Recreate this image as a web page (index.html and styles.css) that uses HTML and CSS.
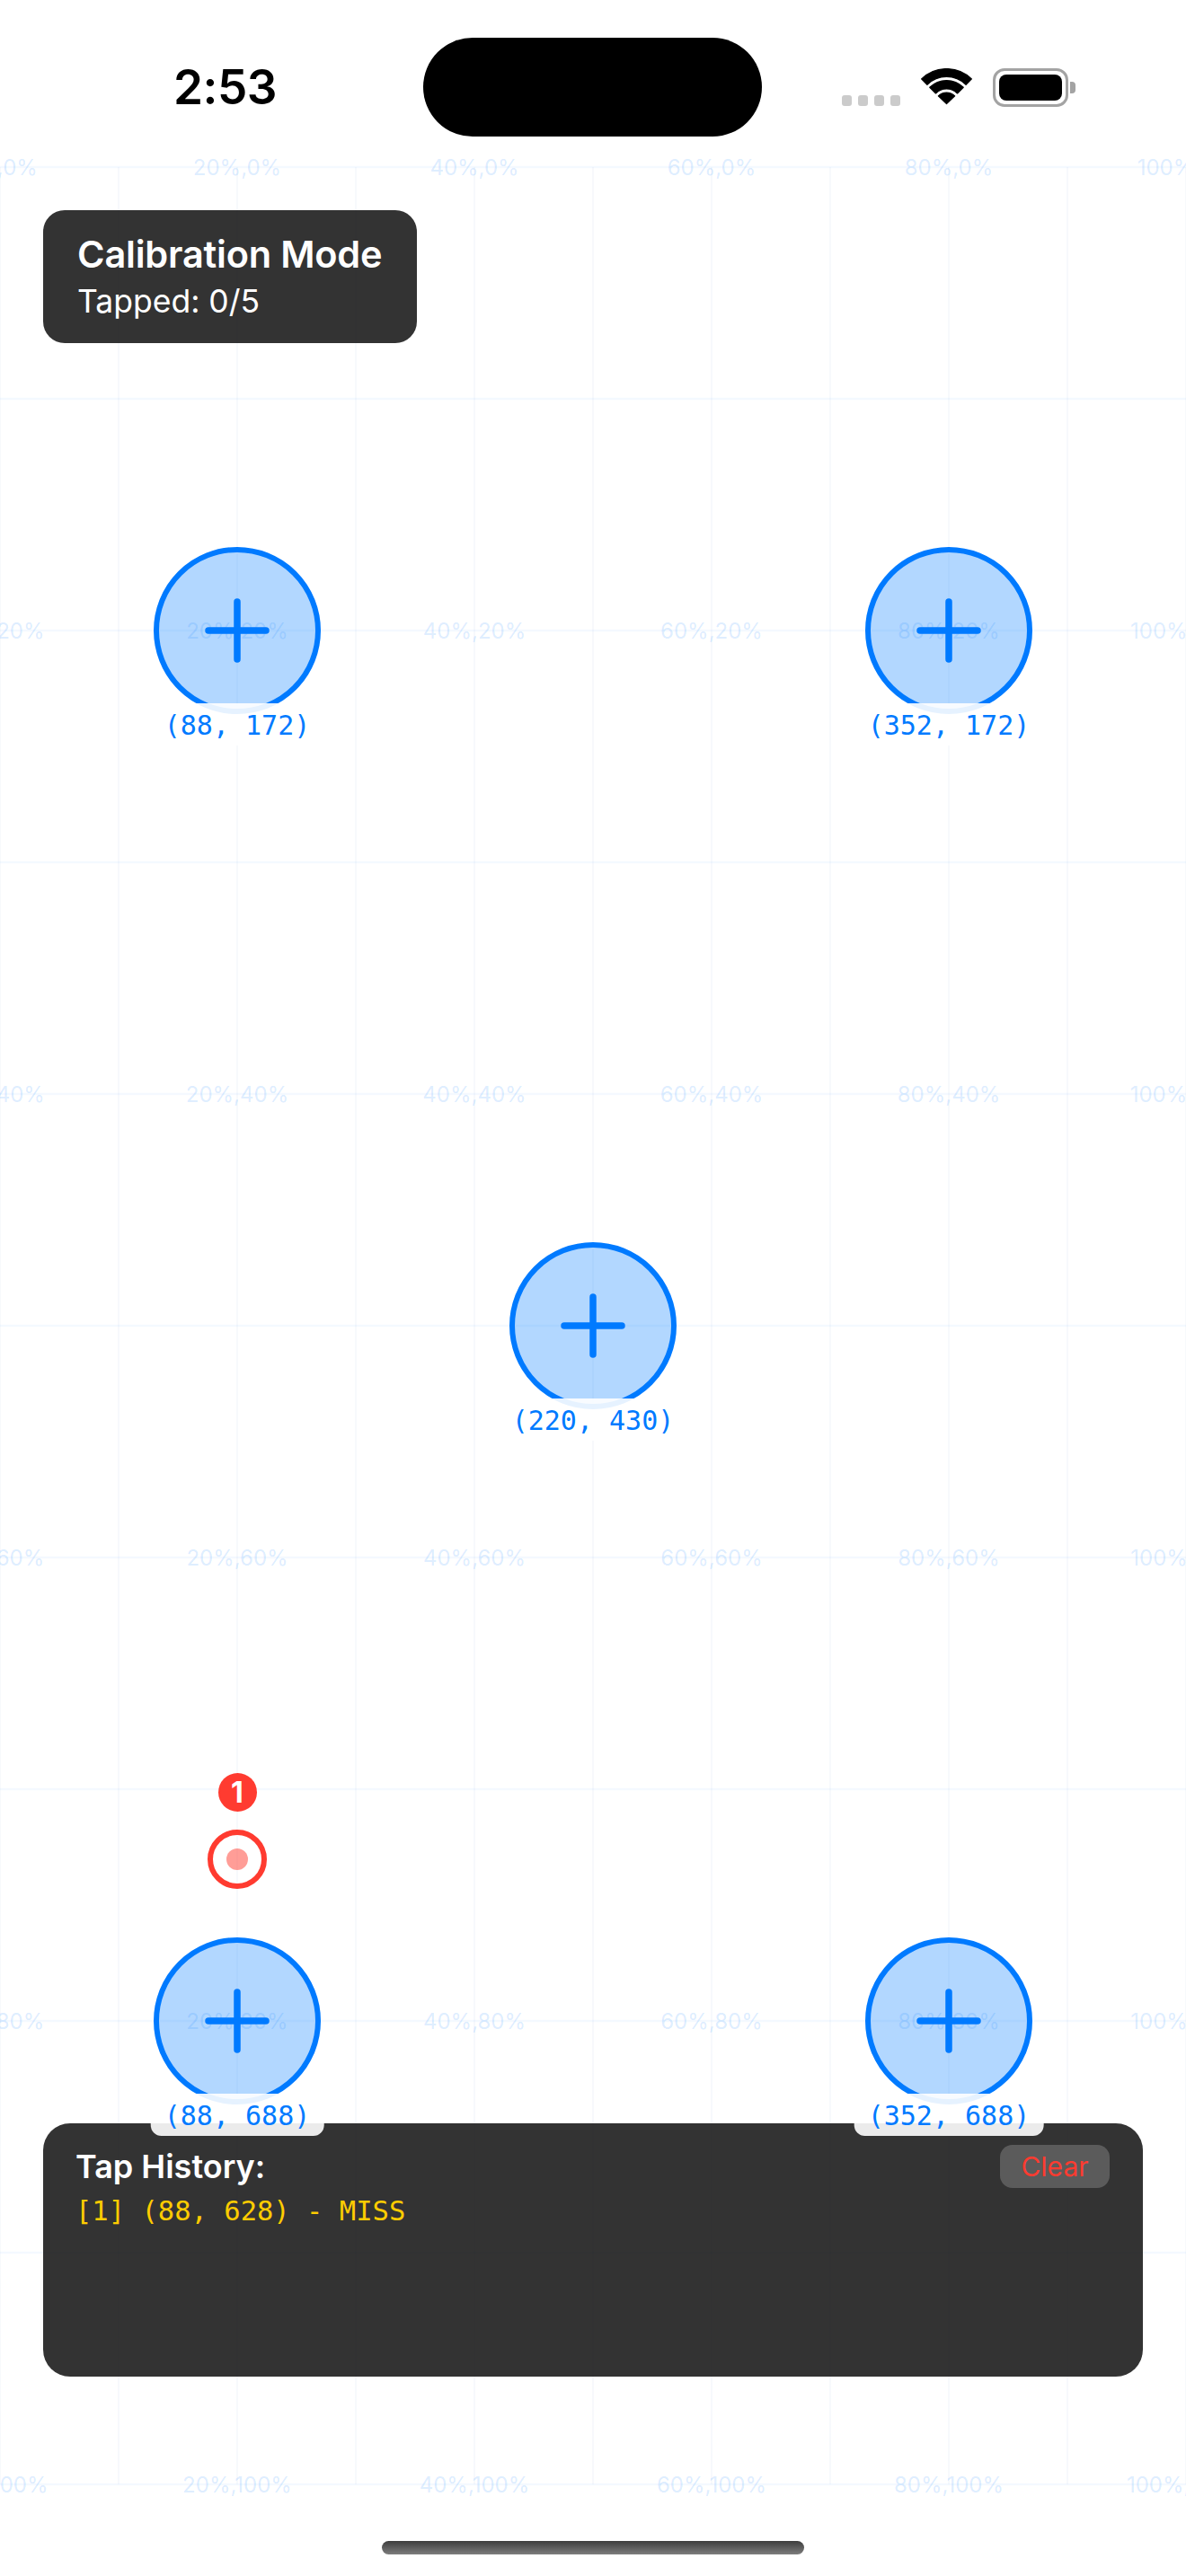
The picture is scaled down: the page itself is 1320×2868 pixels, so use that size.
FILE: index.html
```html
<!DOCTYPE html>
<html lang="en">
<head>
<meta charset="utf-8">
<title>Calibration Mode</title>
<link rel="stylesheet" href="styles.css">
</head>
<body>
<div class="phone">
  <div class="canvas">
    <svg class="grid" width="1320" height="2868" viewBox="0 0 1320 2868">
      <g class="vlines">
        <line x1="0" y1="186" x2="0" y2="2766"/>
        <line x1="132" y1="186" x2="132" y2="2766"/>
        <line x1="264" y1="186" x2="264" y2="2766"/>
        <line x1="396" y1="186" x2="396" y2="2766"/>
        <line x1="528" y1="186" x2="528" y2="2766"/>
        <line x1="660" y1="186" x2="660" y2="2766"/>
        <line x1="792" y1="186" x2="792" y2="2766"/>
        <line x1="924" y1="186" x2="924" y2="2766"/>
        <line x1="1056" y1="186" x2="1056" y2="2766"/>
        <line x1="1188" y1="186" x2="1188" y2="2766"/>
        <line x1="1320" y1="186" x2="1320" y2="2766"/>
      </g>
      <g class="hlines">
        <line x1="0" y1="186" x2="1320" y2="186"/>
        <line x1="0" y1="444" x2="1320" y2="444"/>
        <line x1="0" y1="702" x2="1320" y2="702"/>
        <line x1="0" y1="960" x2="1320" y2="960"/>
        <line x1="0" y1="1218" x2="1320" y2="1218"/>
        <line x1="0" y1="1476" x2="1320" y2="1476"/>
        <line x1="0" y1="1734" x2="1320" y2="1734"/>
        <line x1="0" y1="1992" x2="1320" y2="1992"/>
        <line x1="0" y1="2250" x2="1320" y2="2250"/>
        <line x1="0" y1="2508" x2="1320" y2="2508"/>
        <line x1="0" y1="2766" x2="1320" y2="2766"/>
      </g>
    </svg>

    <span class="gl x0 y0">0%,0%</span><span class="gl x1 y0">20%,0%</span><span class="gl x2 y0">40%,0%</span><span class="gl x3 y0">60%,0%</span><span class="gl x4 y0">80%,0%</span><span class="gl x5 y0">100%,0%</span>
    <span class="gl x0 y1">0%,20%</span><span class="gl x1 y1">20%,20%</span><span class="gl x2 y1">40%,20%</span><span class="gl x3 y1">60%,20%</span><span class="gl x4 y1">80%,20%</span><span class="gl x5 y1">100%,20%</span>
    <span class="gl x0 y2">0%,40%</span><span class="gl x1 y2">20%,40%</span><span class="gl x2 y2">40%,40%</span><span class="gl x3 y2">60%,40%</span><span class="gl x4 y2">80%,40%</span><span class="gl x5 y2">100%,40%</span>
    <span class="gl x0 y3">0%,60%</span><span class="gl x1 y3">20%,60%</span><span class="gl x2 y3">40%,60%</span><span class="gl x3 y3">60%,60%</span><span class="gl x4 y3">80%,60%</span><span class="gl x5 y3">100%,60%</span>
    <span class="gl x0 y4">0%,80%</span><span class="gl x1 y4">20%,80%</span><span class="gl x2 y4">40%,80%</span><span class="gl x3 y4">60%,80%</span><span class="gl x4 y4">80%,80%</span><span class="gl x5 y4">100%,80%</span>
    <span class="gl x0 y5">0%,100%</span><span class="gl x1 y5">20%,100%</span><span class="gl x2 y5">40%,100%</span><span class="gl x3 y5">60%,100%</span><span class="gl x4 y5">80%,100%</span><span class="gl x5 y5">100%,100%</span>

    <div class="target ta">
      <div class="disc"><svg class="plus" width="72" height="72" viewBox="0 0 72 72"><path d="M36 4V68M4 36H68"/></svg></div>
      <div class="coord">(88, 172)</div>
    </div>
    <div class="target tb">
      <div class="disc"><svg class="plus" width="72" height="72" viewBox="0 0 72 72"><path d="M36 4V68M4 36H68"/></svg></div>
      <div class="coord">(352, 172)</div>
    </div>
    <div class="target tc">
      <div class="disc"><svg class="plus" width="72" height="72" viewBox="0 0 72 72"><path d="M36 4V68M4 36H68"/></svg></div>
      <div class="coord">(220, 430)</div>
    </div>
    <div class="target td">
      <div class="disc"><svg class="plus" width="72" height="72" viewBox="0 0 72 72"><path d="M36 4V68M4 36H68"/></svg></div>
      <div class="coord">(88, 688)</div>
    </div>
    <div class="target te">
      <div class="disc"><svg class="plus" width="72" height="72" viewBox="0 0 72 72"><path d="M36 4V68M4 36H68"/></svg></div>
      <div class="coord">(352, 688)</div>
    </div>

    <div class="tap">
      <div class="tap-badge">1</div>
      <div class="tap-ring"><div class="tap-dot"></div></div>
    </div>
  </div>

  <header class="status">
    <div class="time-cell"><span class="time">2:53</span></div>
    <div class="island"></div>
    <div class="indicators">
      <div class="signal"><i></i><i></i><i></i><i></i></div>
      <svg class="wifi" width="57" height="41" viewBox="0 0 57 41">
        <path d="M0.6 11.9A40 40 0 0 1 56.4 11.9L50.07 18.43A30.5 30.5 0 0 0 6.93 18.43Z"/>
        <path d="M9.76 21.26A26.5 26.5 0 0 1 47.24 21.26L40.52 27.98A17 17 0 0 0 16.48 27.98Z"/>
        <path d="M19.31 30.81A13 13 0 0 1 37.69 30.81L28.5 39.5Z"/>
      </svg>
      <div class="battery">
        <div class="battery-body"><div class="battery-fill"></div></div>
        <div class="battery-cap"></div>
      </div>
    </div>
  </header>

  <main class="overlay">
    <section class="calib">
      <div class="calib-title">Calibration Mode</div>
      <div class="calib-sub">Tapped: 0/5</div>
    </section>
    <section class="history">
      <div class="history-head">
        <div class="history-title">Tap History:</div>
        <button class="clear" type="button">Clear</button>
      </div>
      <div class="history-line">[1] (88, 628) - MISS</div>
    </section>
  </main>

  <footer class="home"><div class="home-bar"></div></footer>
</div>
</body>
</html>
```

FILE: styles.css
```css
* { box-sizing: border-box; }

html, body {
  margin: 0;
  padding: 0;
  background: #ffffff;
}

body {
  font-family: Inter, "Noto Sans", "Liberation Sans", sans-serif;
}

.phone {
  position: relative;
  width: 1320px;
  height: 2868px;
  overflow: hidden;
  display: flex;
  flex-direction: column;
  background: #ffffff;
}

/* ---------- free canvas: grid, targets, taps ---------- */
.canvas {
  position: absolute;
  left: 0;
  top: 0;
  width: 1320px;
  height: 2868px;
}

.grid {
  position: absolute;
  left: 0;
  top: 0;
}

.vlines line {
  stroke: rgba(40, 90, 170, 0.035);
  stroke-width: 2;
}

.hlines line {
  stroke: rgba(0, 122, 255, 0.045);
  stroke-width: 2.5;
}

.gl {
  position: absolute;
  transform: translate(-50%, -50%);
  font-family: Inter, "Liberation Sans", sans-serif;
  font-size: 24px;
  line-height: 24px;
  color: rgba(0, 122, 255, 0.15);
  white-space: nowrap;
}

.x0 { left: 0; }
.x1 { left: 264px; }
.x2 { left: 528px; }
.x3 { left: 792px; }
.x4 { left: 1056px; }
.x5 { left: 1320px; }
.y0 { top: 187px; }
.y1 { top: 703px; }
.y2 { top: 1219px; }
.y3 { top: 1735px; }
.y4 { top: 2251px; }
.y5 { top: 2767px; }

.target {
  position: absolute;
  width: 0;
  height: 0;
}

.ta { left: 264px; top: 702px; }
.tb { left: 1056px; top: 702px; }
.tc { left: 660px; top: 1476px; }
.td { left: 264px; top: 2250px; }
.te { left: 1056px; top: 2250px; }

.disc {
  position: absolute;
  left: -93px;
  top: -93px;
  width: 186px;
  height: 186px;
  border: 6px solid #007AFF;
  border-radius: 50%;
  background: rgba(0, 122, 255, 0.3);
  display: flex;
  align-items: center;
  justify-content: center;
}

.plus path {
  fill: none;
  stroke: #007AFF;
  stroke-width: 7.5;
  stroke-linecap: round;
}

.coord {
  position: absolute;
  z-index: 2;
  top: 81px;
  left: 0;
  transform: translateX(-50%);
  padding: 4px 15px 2px;
  border-radius: 12px;
  background: rgba(255, 255, 255, 0.9);
  color: #007AFF;
  font-family: "DejaVu Sans Mono", "Liberation Mono", monospace;
  font-size: 30px;
  line-height: 41px;
  white-space: nowrap;
}

.tap {
  position: absolute;
  left: 264px;
  top: 2070px;
  width: 0;
  height: 0;
}

.tap-ring {
  position: absolute;
  left: -33px;
  top: -33px;
  width: 66px;
  height: 66px;
  border: 6px solid #FF3B30;
  border-radius: 50%;
  display: flex;
  align-items: center;
  justify-content: center;
}

.tap-dot {
  width: 24px;
  height: 24px;
  border-radius: 50%;
  background: rgba(255, 59, 48, 0.5);
}

.tap-badge {
  position: absolute;
  left: -21.5px;
  top: -96px;
  width: 43px;
  height: 43px;
  border-radius: 50%;
  background: #FF3B30;
  color: #ffffff;
  font-weight: 700;
  font-size: 32px;
  line-height: 43px;
  text-align: center;
}

/* ---------- status bar ---------- */
.status {
  position: relative;
  z-index: 1;
  height: 110px;
  margin-top: 42px;
  display: flex;
  align-items: center;
  flex-shrink: 0;
}

.time-cell {
  width: 471px;
  padding-left: 193px;
}

.time {
  font-size: 53px;
  font-weight: 600;
  letter-spacing: -0.5px;
  color: #000000;
  line-height: 60px;
  display: block;
}

.island {
  width: 377px;
  height: 110px;
  border-radius: 55px;
  background: #000000;
}

.indicators {
  display: flex;
  align-items: center;
  padding-left: 89px;
}

.signal {
  display: flex;
  gap: 7px;
  margin-top: 29px;
}

.signal i {
  display: block;
  width: 11px;
  height: 12px;
  border-radius: 3px;
  background: #cbcbcb;
}

.wifi {
  margin-left: 23px;
  margin-top: -1px;
}

.wifi path {
  fill: #000000;
  stroke: #000000;
  stroke-width: 1.2;
  stroke-linejoin: round;
}

.battery {
  display: flex;
  align-items: center;
  margin-left: 23px;
}

.battery-body {
  width: 84px;
  height: 43px;
  border: 3px solid #a3a3a3;
  border-radius: 13px;
  padding: 4px;
}

.battery-fill {
  width: 100%;
  height: 100%;
  border-radius: 8px;
  background: #000000;
}

.battery-cap {
  width: 6px;
  height: 13px;
  margin-left: 2px;
  border-radius: 0 4px 4px 0;
  background: #a3a3a3;
}

/* ---------- overlay panels ---------- */
.overlay {
  position: relative;
  z-index: 1;
  flex: 1;
  display: flex;
  flex-direction: column;
  padding: 82px 48px 0;
}

.calib {
  align-self: flex-start;
  width: 416px;
  padding: 25px 38px;
  border-radius: 24px;
  background: rgba(0, 0, 0, 0.8);
  color: #ffffff;
}

.calib-title {
  font-size: 41.5px;
  font-weight: 600;
  line-height: 48px;
  letter-spacing: -0.2px;
  white-space: nowrap;
}

.calib-sub {
  margin-top: 8px;
  font-size: 35.5px;
  font-weight: 400;
  line-height: 42px;
}

.history {
  margin-top: auto;
  height: 282px;
  padding: 24px 37px 24px 36px;
  border-radius: 30px;
  background: rgba(0, 0, 0, 0.8);
}

.history-head {
  display: flex;
  justify-content: space-between;
  align-items: center;
  height: 48px;
}

.history-title {
  color: #ffffff;
  font-size: 36px;
  font-weight: 600;
  line-height: 42px;
}

.clear {
  width: 122px;
  height: 48px;
  border: none;
  border-radius: 14px;
  padding: 0;
  background: rgba(255, 255, 255, 0.2);
  color: #FF3B30;
  font-family: Inter, "Liberation Sans", sans-serif;
  font-size: 30px;
  line-height: 48px;
  text-align: center;
}

.history-line {
  margin-top: 8px;
  color: #FFCC00;
  font-family: "DejaVu Sans Mono", "Liberation Mono", monospace;
  font-size: 30.5px;
  line-height: 36px;
  white-space: nowrap;
}

/* ---------- home indicator ---------- */
.home {
  position: relative;
  z-index: 1;
  height: 222px;
  flex-shrink: 0;
  display: flex;
  justify-content: center;
  align-items: flex-end;
  padding-bottom: 24px;
}

.home-bar {
  width: 470px;
  height: 15px;
  border-radius: 8px;
  background: linear-gradient(#3d3d3d, #7d7d7d);
}
```
